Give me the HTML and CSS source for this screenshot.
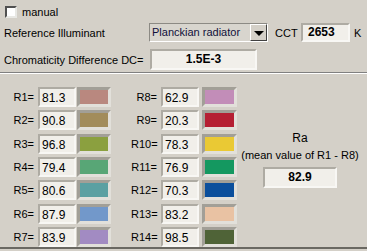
FILE: index.html
```
<!DOCTYPE html>
<html lang="en">
<head>
    <meta charset="UTF-8">
    <title>Color Rendering</title>
    <link rel="stylesheet" href="styles.css">
</head>
<body>
    <div class="top">
        <div class="row row_check">
            <span class="check"></span>
            <span class="check_label">manual</span>
        </div>
        <div class="row row_ref">
            <span class="lab_ref">Reference Illuminant</span>
            <div class="combo">
                <span class="combo_text">Planckian radiator</span>
                <span class="combo_btn"><span class="arrow"></span></span>
            </div>
            <span class="cct_lab">CCT</span>
            <div class="box cct_box">2653</div>
            <span class="unit">K</span>
        </div>
        <div class="row row_dc">
            <span class="lab_dc">Chromaticity Difference DC=</span>
            <div class="box dc_box">1.5E-3</div>
        </div>
    </div>

    <div class="lower">
        <div class="grid">
            <div class="rrow">
                <span class="lab">R1=</span><span class="val">81.3</span><span class="sw" style="background:#b9887f"></span>
                <span class="lab c2">R8=</span><span class="val">62.9</span><span class="sw c2" style="background:#c28db8"></span>
            </div>
            <div class="rrow">
                <span class="lab">R2=</span><span class="val">90.8</span><span class="sw" style="background:#a28c5b"></span>
                <span class="lab c2">R9=</span><span class="val">20.3</span><span class="sw c2" style="background:#b51f33"></span>
            </div>
            <div class="rrow">
                <span class="lab">R3=</span><span class="val">96.8</span><span class="sw" style="background:#8ba03f"></span>
                <span class="lab c2">R10=</span><span class="val">78.3</span><span class="sw c2" style="background:#eac934"></span>
            </div>
            <div class="rrow">
                <span class="lab">R4=</span><span class="val">79.4</span><span class="sw" style="background:#58a676"></span>
                <span class="lab c2">R11=</span><span class="val">76.9</span><span class="sw c2" style="background:#149860"></span>
            </div>
            <div class="rrow">
                <span class="lab">R5=</span><span class="val">80.6</span><span class="sw" style="background:#5ba0a2"></span>
                <span class="lab c2">R12=</span><span class="val">70.3</span><span class="sw c2" style="background:#0b4f9c"></span>
            </div>
            <div class="rrow">
                <span class="lab">R6=</span><span class="val">87.9</span><span class="sw" style="background:#7298ca"></span>
                <span class="lab c2">R13=</span><span class="val">83.2</span><span class="sw c2" style="background:#e9c2a3"></span>
            </div>
            <div class="rrow">
                <span class="lab">R7=</span><span class="val">83.9</span><span class="sw" style="background:#a28bc2"></span>
                <span class="lab c2">R14=</span><span class="val">98.5</span><span class="sw c2" style="background:#4f6337"></span>
            </div>
        </div>
        <div class="ra">
            <div class="ra_title">Ra</div>
            <div class="ra_note">(mean value of R1 - R8)</div>
            <div class="box ra_box">82.9</div>
        </div>
    </div>
</body>
</html>
```

FILE: styles.css
```
body{
    margin: 0;
    width: 367px;
    height: 251px;
    overflow: hidden;
    background-color: #d4d0c8;
    font-family: "Liberation Sans", Arial, sans-serif;
    font-size: 11px;
    color: #000;
}
.top{
    box-sizing: border-box;
    height: 72px;
    padding: 6px 0 0 4px;
}
.row{
    display: flex;
    align-items: center;
}
.row_check{
    height: 12px;
    margin-left: 1px;
}
.check{
    box-sizing: border-box;
    width: 12px;
    height: 12px;
    background-color: #fff;
    border: 2px solid;
    border-color: #505050 #e8e8e4 #e8e8e4 #505050;
}
.check_label{
    margin-left: 5px;
}
.row_ref{
    height: 19px;
    margin-top: 5px;
}
.lab_ref{
    width: 145px;
}
.combo{
    box-sizing: border-box;
    width: 119px;
    height: 19px;
    display: flex;
    border: 1px solid;
    border-color: #8c8a84 #fff #fff #8c8a84;
    background-color: #d8d5ce;
}
.combo_text{
    flex: 1;
    padding-left: 2px;
    line-height: 17px;
    color: #10103a;
}
.combo_btn{
    box-sizing: border-box;
    width: 17px;
    height: 17px;
    display: flex;
    align-items: center;
    justify-content: center;
    background-color: #d4d0c8;
    border: 1px solid;
    border-color: #fff #404040 #404040 #fff;
}
.arrow{
    width: 0;
    height: 0;
    margin-top: 1px;
    border-left: 5px solid transparent;
    border-right: 5px solid transparent;
    border-top: 5px solid #000;
}
.cct_lab{
    margin-left: 7px;
    width: 22px;
}
.box{
    box-sizing: border-box;
    background-color: #f1efea;
    border: 2px solid;
    border-color: #aeaba3 #f8f7f4 #f8f7f4 #aeaba3;
    font-weight: bold;
    font-size: 12px;
}
.cct_box{
    margin-left: 4px;
    width: 49px;
    height: 19px;
    line-height: 15px;
    padding-left: 5px;
}
.unit{
    margin-left: 4px;
}
.row_dc{
    height: 21px;
    margin-top: 7px;
}
.lab_dc{
    width: 146px;
}
.dc_box{
    width: 107px;
    height: 21px;
    line-height: 17px;
    text-align: center;
}
.lower{
    box-sizing: border-box;
    height: 177px;
    display: flex;
    padding-top: 14px;
    border-top: 1px solid #808080;
    border-bottom: 2px solid #6a6862;
    box-shadow: inset 0 1px 0 #fff;
}
.grid{
    display: flex;
    flex-direction: column;
    gap: 3.33px;
    padding-left: 8px;
}
.rrow{
    display: flex;
    align-items: center;
    height: 20px;
}
.lab{
    width: 26px;
    margin-right: 4px;
    text-align: right;
    font-size: 11px;
}
.lab.c2{
    margin-left: 20px;
}
.val{
    box-sizing: border-box;
    width: 38px;
    height: 20px;
    line-height: 17px;
    padding: 1px 0 0 2px;
    font-size: 12px;
    background-color: #f1efea;
    border: 2px solid;
    border-color: #aeaba3 #f8f7f4 #f8f7f4 #aeaba3;
}
.sw{
    box-sizing: border-box;
    width: 34px;
    height: 20px;
    margin-left: 1px;
    border: 3px solid;
    border-color: #a29f97 #e2e0da #e2e0da #a29f97;
}
.sw.c2{
    width: 35px;
    margin-left: 3px;
}
.ra{
    flex: 1;
    display: flex;
    flex-direction: column;
    align-items: center;
    padding-right: 4px;
}
.ra_title{
    margin-top: 44px;
    font-size: 12px;
    line-height: 14px;
}
.ra_note{
    margin-top: 3px;
    line-height: 14px;
}
.ra_box{
    margin-top: 5px;
    width: 74px;
    height: 21px;
    line-height: 17px;
    text-align: center;
}
```
